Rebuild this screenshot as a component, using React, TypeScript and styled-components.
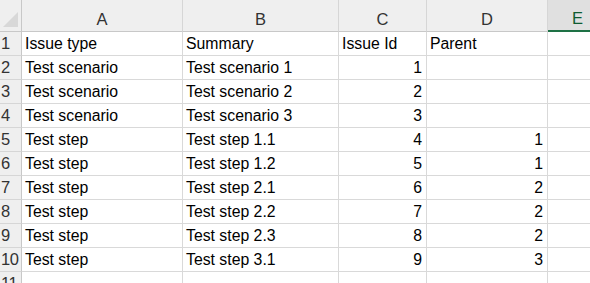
import { Fragment } from 'react'
import styled, { createGlobalStyle } from 'styled-components'

const GlobalStyle = createGlobalStyle`
  html, body {
    margin: 0;
    padding: 0;
    background: #ffffff;
    overflow: hidden;
  }
`

const columns = [ 'A', 'B', 'C', 'D', 'E' ]

const rows: Array<[string, string, string, string]> = [
  [ 'Issue type', 'Summary', 'Issue Id', 'Parent' ],
  [ 'Test scenario', 'Test scenario 1', '1', '' ],
  [ 'Test scenario', 'Test scenario 2', '2', '' ],
  [ 'Test scenario', 'Test scenario 3', '3', '' ],
  [ 'Test step', 'Test step 1.1', '4', '1' ],
  [ 'Test step', 'Test step 1.2', '5', '1' ],
  [ 'Test step', 'Test step 2.1', '6', '2' ],
  [ 'Test step', 'Test step 2.2', '7', '2' ],
  [ 'Test step', 'Test step 2.3', '8', '2' ],
  [ 'Test step', 'Test step 3.1', '9', '3' ],
  [ '', '', '', '' ]
]

const Sheet = styled.div`
  display: grid;
  grid-template-columns: 22px 161px 156px 88px 121px 60px;
  grid-template-rows: 32px;
  grid-auto-rows: 24px;
  width: 590px;
  height: 283px;
  overflow: hidden;
  font-family: 'Liberation Sans', Arial, sans-serif;
  font-size: 15.8px;
  color: #000;
`

const Corner = styled.div`
  display: flex;
  align-items: flex-end;
  justify-content: flex-end;
  padding: 0 3px 4px 0;
  background: #efefef;
  border-right: 1px solid #c8c8c8;
  border-bottom: 1px solid #c8c8c8;
  box-sizing: border-box;
`

const Triangle = styled.div`
  width: 15px;
  height: 15px;
  background: #d8d8d8;
  clip-path: polygon(100% 0, 100% 100%, 0 100%);
`

const ColHeader = styled.div<{ $selected?: boolean }>`
  display: flex;
  align-items: flex-end;
  justify-content: center;
  padding-bottom: 2px;
  box-sizing: border-box;
  background: ${p => (p.$selected ? '#e0e0e0' : '#efefef')};
  border-right: 1px solid #d6d6d6;
  border-bottom: ${p => (p.$selected ? '2px solid #1e7145' : '1px solid #c8c8c8')};
  color: ${p => (p.$selected ? '#0f5c32' : '#333')};
  font-size: 16.5px;
  line-height: 20px;
`

const RowHeader = styled.div`
  display: flex;
  align-items: center;
  padding-left: 1px;
  box-sizing: border-box;
  background: #efefef;
  border-right: 1px solid #c8c8c8;
  border-bottom: 1px solid #d6d6d6;
  color: #333;
  font-size: 16.5px;
  letter-spacing: -0.5px;
  white-space: nowrap;
  overflow: hidden;
`

const Cell = styled.div<{ $numeric?: boolean }>`
  display: flex;
  align-items: center;
  justify-content: ${p => (p.$numeric ? 'flex-end' : 'flex-start')};
  padding: 0 4px 0 3px;
  box-sizing: border-box;
  background: #fff;
  border-right: 1px solid #d9d9d9;
  border-bottom: 1px solid #d9d9d9;
  white-space: nowrap;
  overflow: hidden;
`

export default function App () {
  return (
    <>
      <GlobalStyle />
      <Sheet>
        <Corner><Triangle /></Corner>
        {columns.map(c => (
          <ColHeader key={c} $selected={c === 'E'}>{c}</ColHeader>
        ))}
        {rows.map((r, i) => (
          <Fragment key={i}>
            <RowHeader>{i + 1}</RowHeader>
            <Cell>{r[0]}</Cell>
            <Cell>{r[1]}</Cell>
            <Cell $numeric={i > 0}>{r[2]}</Cell>
            <Cell $numeric={i > 0}>{r[3]}</Cell>
            <Cell />
          </Fragment>
        ))}
      </Sheet>
    </>
  )
}
